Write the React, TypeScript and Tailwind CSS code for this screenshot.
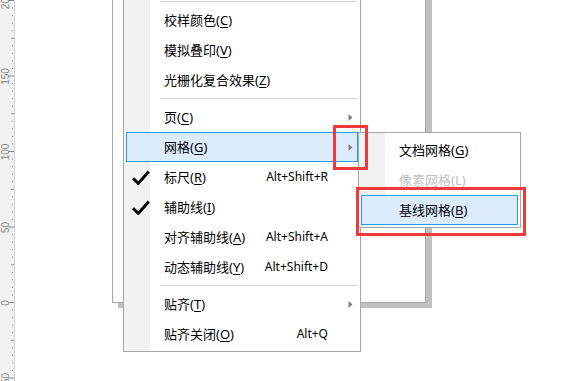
import type { ReactNode } from "react";

type Item =
  | { sep: true }
  | {
      sep?: false;
      label: string;
      hotkey: string;
      shortcut?: string;
      arrow?: boolean;
      check?: boolean;
      active?: boolean;
      disabled?: boolean;
    };

const mainItems: Item[] = [
  { sep: true },
  { label: "校样颜色", hotkey: "C" },
  { label: "模拟叠印", hotkey: "V" },
  { label: "光栅化复合效果", hotkey: "Z" },
  { sep: true },
  { label: "页", hotkey: "C", arrow: true },
  { label: "网格", hotkey: "G", arrow: true, active: true },
  { label: "标尺", hotkey: "R", check: true, shortcut: "Alt+Shift+R" },
  { label: "辅助线", hotkey: "I", check: true },
  { label: "对齐辅助线", hotkey: "A", shortcut: "Alt+Shift+A" },
  { label: "动态辅助线", hotkey: "Y", shortcut: "Alt+Shift+D" },
  { sep: true },
  { label: "贴齐", hotkey: "T", arrow: true },
  { label: "贴齐关闭", hotkey: "O", shortcut: "Alt+Q" },
];

const subItems: Item[] = [
  { label: "文档网格", hotkey: "G" },
  { label: "像素网格", hotkey: "L", disabled: true },
  { label: "基线网格", hotkey: "B", active: true },
];

function Check() {
  return (
    <svg width="18" height="15" viewBox="0 0 18 15">
      <path d="M1 8.2 L6.3 13.4 L16.8 1.6" fill="none" stroke="#000" strokeWidth="3" strokeLinejoin="miter" />
    </svg>
  );
}

function Arrow() {
  return (
    <svg width="5" height="7" viewBox="0 0 5 7">
      <path d="M0.5 0 L4.5 3.5 L0.5 7 Z" fill="#808080" />
    </svg>
  );
}

function Row({ item }: { item: Item }) {
  if (item.sep) {
    return (
      <div className="h-[7px] pt-[3px]">
        <div className="ml-[34px] h-px bg-[#d7d7d7]" />
      </div>
    );
  }
  return (
    <div
      className={
        "flex h-[30px] items-center border " +
        (item.active ? "border-[#1e9fef] bg-[#dcecfc]" : "border-transparent")
      }
    >
      <div className="flex w-[37px] shrink-0 items-center pl-[5px]">{item.check && <Check />}</div>
      <div className={"flex-1 whitespace-nowrap " + (item.disabled ? "text-[#c2c2c2]" : "text-black")}>
        {item.label}(<span className="underline underline-offset-[2px]">{item.hotkey}</span>)
      </div>
      {item.shortcut && <div className="whitespace-nowrap text-[12px]">{item.shortcut}</div>}
      <div className="flex w-[29px] shrink-0 justify-end pr-[4px]">{item.arrow && <Arrow />}</div>
    </div>
  );
}

function Menu({ items, className }: { items: Item[]; className: string }) {
  return (
    <div
      className={
        "absolute border border-[#a6a6a6] bg-[linear-gradient(to_right,#f2f2f2_0,#f2f2f2_26px,#fff_26px)] p-[2px] " +
        className
      }
    >
      {items.map((it, i) => (
        <Row key={i} item={it} />
      ))}
    </div>
  );
}

function Ruler() {
  const marks: ReactNode[] = [];
  for (let v = -55; v <= 205; v += 5) {
    const y = 302 - v * 1.51;
    if (v % 50 === 0) {
      marks.push(
        <g key={v}>
          <line x1="8" x2="14" y1={y + 0.5} y2={y + 0.5} stroke="#8a8a8a" />
          <text
            transform={`translate(9 ${y + 1}) rotate(-90)`}
            textAnchor="middle"
            fontSize="10"
            fill="#888"
            fontFamily="'Liberation Sans', sans-serif"
          >
            {Math.abs(v)}
          </text>
        </g>
      );
    } else if (v % 25 === 0) {
      marks.push(<line key={v} x1="11" x2="14" y1={y + 0.5} y2={y + 0.5} stroke="#8a8a8a" />);
    } else {
      marks.push(<rect key={v} x="12" y={y} width="1" height="1" fill="#8a8a8a" />);
    }
  }
  return (
    <div className="h-full w-[15px] shrink-0 border-r border-[#d4d4d4] bg-[#f2f2f2]">
      <svg width="14" height="381" viewBox="0 0 14 381">
        {marks}
      </svg>
    </div>
  );
}

export default function App() {
  return (
    <div className="relative flex h-[381px] w-[582px] overflow-hidden bg-white font-['Noto_Sans','Noto_Sans_CJK_SC',sans-serif] text-[13px] leading-none text-black">
      <Ruler />
      <div className="flex-1" />

      {/* document page with its drop shadow */}
      <div className="absolute left-[112px] top-[-10px] h-[313px] w-[314px] border border-[#a8a8a8] bg-white shadow-[6px_5px_0_0_#c0c0c0]" />

      <Menu items={mainItems} className="left-[123px] top-[-5px] w-[238px]" />
      <Menu items={subItems} className="left-[358px] top-[132px] w-[163px]" />

      {/* red callouts */}
      <div className="absolute left-[333px] top-[125px] h-[45px] w-[35px] border-[3px] border-[#ef3a3a]" />
      <div className="absolute left-[356px] top-[187px] h-[49px] w-[170px] border-[3px] border-[#ef3a3a]" />
    </div>
  );
}
